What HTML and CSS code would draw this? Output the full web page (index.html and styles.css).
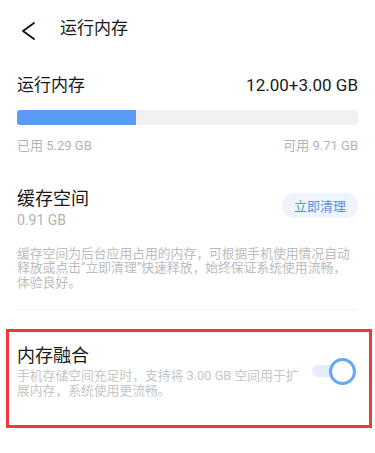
FILE: index.html
```html
<!DOCTYPE html>
<html lang="zh-CN">
<head>
    <meta charset="UTF-8">
    <meta name="viewport" content="width=device-width, initial-scale=1.0">
    <title>运行内存</title>
    <link rel="stylesheet" href="styles.css">
</head>
<body>

<div class="header">
    <svg class="back" width="24" height="24" viewBox="0 0 24 24">
        <path d="M17 7 L6 15 L17 23" fill="none" stroke="#111" stroke-width="1.8" stroke-linecap="round" stroke-linejoin="round"/>
    </svg>
    <div class="title">运行内存</div>
</div>

<div class="page">
    <div class="ram">
        <div class="ram-row">
            <span class="ram-name">运行内存</span>
            <span class="ram-total">12.00+3.00 GB</span>
        </div>
        <div class="bar">
            <div class="bar-used" style="width: 34.9%"></div>
        </div>
        <div class="bar-labels">
            <span>已用 5.29 GB</span>
            <span>可用 9.71 GB</span>
        </div>
    </div>

    <div class="cache">
        <div class="cache-row">
            <div>
                <div class="item-title">缓存空间</div>
                <div class="cache-size">0.91 GB</div>
            </div>
            <button class="clean-btn">立即清理</button>
        </div>
        <p class="desc">缓存空间为后台应用占用的内存，可根据手机使用情况自动释放或点击“立即清理”快速释放，始终保证系统使用流畅，体验良好。</p>
    </div>

    <div class="divider"></div>

    <div class="fusion">
        <div class="fusion-text">
            <div class="item-title">内存融合</div>
            <p class="desc fusion-desc">手机存储空间充足时，支持将 3.00 GB 空间用于扩展内存，系统使用更流畅。</p>
        </div>
        <div class="switch">
            <div class="switch-track"></div>
            <div class="switch-knob"></div>
        </div>
    </div>
</div>

</body>
</html>
```

FILE: styles.css
```css
body {
    margin: 0;
    background: #fff;
    font-family: Roboto, "Noto Sans CJK SC", sans-serif;
    color: #1a1a1a;
}
.header {
    height: 56px;
    display: flex;
    align-items: center;
    padding-left: 17px;
}
.header .back {
    display: block;
}
.header .title {
    margin-left: 19px;
    font-size: 17px;
    line-height: 24px;
}
.page {
    padding: 0 17px;
}
.ram {
    padding-top: 17px;
}
.ram-row {
    display: flex;
    justify-content: space-between;
    font-size: 17px;
    line-height: 24px;
}
.bar {
    margin-top: 13px;
    height: 15px;
    border-radius: 3px;
    background: #f3f0f1;
    overflow: hidden;
}
.bar-used {
    height: 100%;
    background: #5b9bf5;
}
.bar-labels {
    margin-top: 12px;
    display: flex;
    justify-content: space-between;
    font-size: 13px;
    line-height: 18px;
    color: #b3b3b3;
}
.cache {
    margin-top: 33px;
}
.cache-row {
    display: flex;
    justify-content: space-between;
    align-items: flex-start;
}
.item-title {
    font-size: 18px;
    line-height: 22px;
}
.cache-size {
    font-size: 14px;
    line-height: 20px;
    color: #b3b3b3;
}
.clean-btn {
    margin-top: 5px;
    width: 76px;
    height: 25px;
    border: none;
    border-radius: 13px;
    background: #eef4fd;
    color: #5b8fdf;
    font-family: "Noto Sans CJK SC", sans-serif;
    font-size: 13px;
    padding: 0;
}
.desc {
    margin: 17px 0 0;
    font-size: 12.8px;
    line-height: 14.4px;
    color: #bcbcbc;
}
.divider {
    margin-top: 19px;
    height: 1px;
    background: #f3f3f3;
}
.fusion {
    margin: 19px -14px 0 -11px;
    border: 3px solid #f03a3a;
    padding: 13px 13px 0 8px;
    height: 80px;
    display: flex;
    justify-content: space-between;
}
.fusion-text {
    width: 290px;
}
.fusion-desc {
    margin-top: 2px;
    line-height: 14.8px;
    color: #c6c6c6;
}
.switch {
    position: relative;
    width: 44px;
    height: 27px;
    margin-top: 13px;
}
.switch-track {
    position: absolute;
    left: 0;
    top: 7px;
    width: 30px;
    height: 12px;
    border-radius: 6px;
    background: #e4edfc;
}
.switch-knob {
    position: absolute;
    right: 0;
    top: 0;
    width: 21px;
    height: 21px;
    border: 3px solid #68a7f6;
    border-radius: 50%;
    background: #fff;
}
```
